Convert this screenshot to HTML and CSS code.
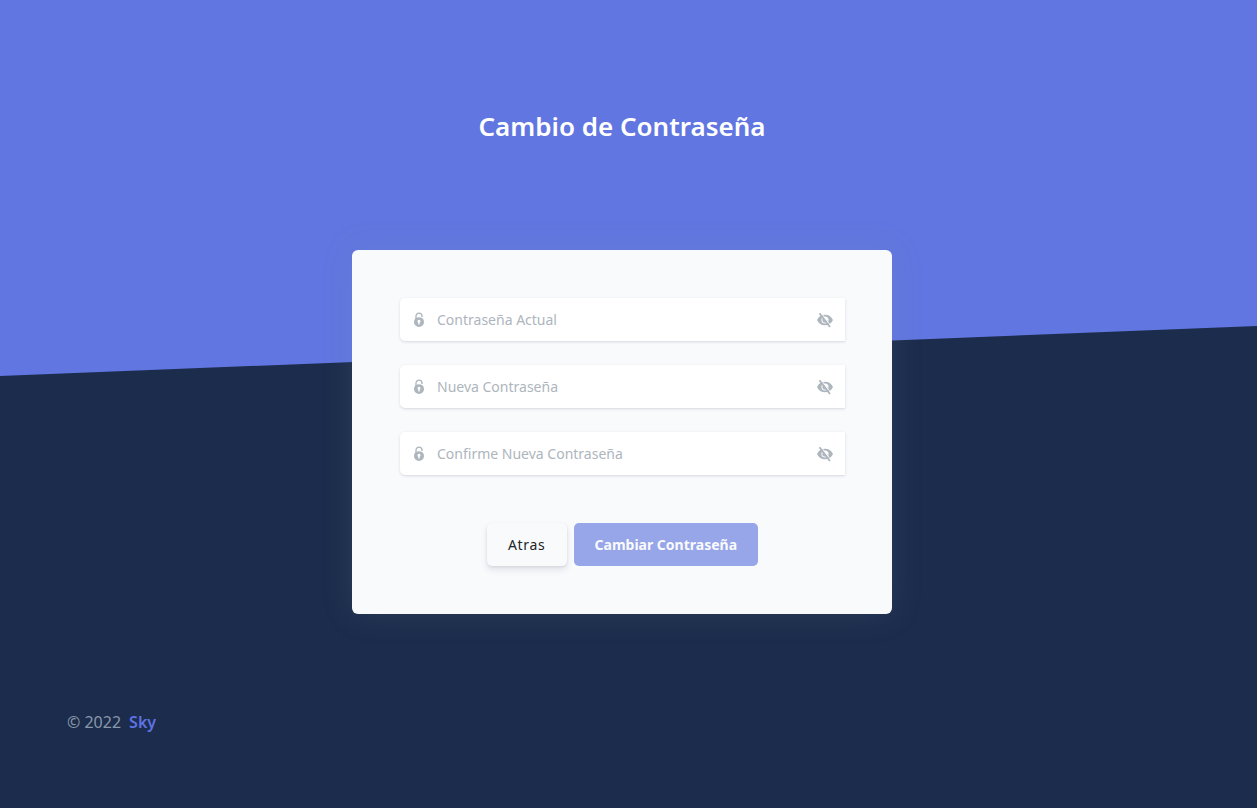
FILE: index.html
```
<!DOCTYPE html>
<html lang="es">
<head>
<meta charset="utf-8">
<meta name="viewport" content="width=device-width, initial-scale=1">
<title>Cambio de Contraseña</title>
<link rel="stylesheet" href="styles.css">
</head>
<body>
<svg class="defs" width="0" height="0" aria-hidden="true">
  <symbol id="lock" viewBox="0 0 12 16">
    <path d="M3 7V4.200a3 3 0 0 1 6 0v.8" fill="none" stroke="currentColor" stroke-width="1.300"/>
    <path fill="currentColor" fill-rule="evenodd" d="M2.900 5.900C4.800 5 7.200 5 9.100 5.900A5 5 0 0 1 11 10a5 5 0 0 1-10 0 5 5 0 0 1 1.900-4.100zM6 7.700a1.600 1.600 0 0 0-.7 3V12.500h1.400v-1.800a1.600 1.600 0 0 0-.7-3z"/>
  </symbol>
  <symbol id="eye-off" viewBox="0 0 18 16">
    <path fill="currentColor" fill-rule="evenodd" d="M1 8c1.600-3.400 4.500-5.300 8-5.300S15.400 4.600 17 8c-1.600 3.400-4.500 5.300-8 5.300S2.600 11.400 1 8zM9 4.400a3.600 3.600 0 1 0 0 7.200 3.600 3.600 0 0 0 0-7.200z"/>
    <path fill="currentColor" d="M9 5.400a2.600 2.600 0 1 0 2.600 2.600A1.500 1.500 0 0 1 9 5.400z"/>
    <path d="M4.800.6 15 14.200" stroke="#fff" stroke-width="1"/>
    <path d="M3.500 1.200 14 15" stroke="currentColor" stroke-width="1.800"/>
  </symbol>
</svg>
<main class="page">
  <h1 class="title">Cambio de Contraseña</h1>
  <form class="card">
    <div class="field">
      <svg class="lock"><use href="#lock"/></svg>
      <input class="input" type="password" placeholder="Contraseña Actual" aria-label="Contraseña Actual">
      <button class="toggle" type="button" aria-label="Mostrar contraseña"><svg class="eye"><use href="#eye-off"/></svg></button>
    </div>
    <div class="field">
      <svg class="lock"><use href="#lock"/></svg>
      <input class="input" type="password" placeholder="Nueva Contraseña" aria-label="Nueva Contraseña">
      <button class="toggle" type="button" aria-label="Mostrar contraseña"><svg class="eye"><use href="#eye-off"/></svg></button>
    </div>
    <div class="field">
      <svg class="lock"><use href="#lock"/></svg>
      <input class="input" type="password" placeholder="Confirme Nueva Contraseña" aria-label="Confirme Nueva Contraseña">
      <button class="toggle" type="button" aria-label="Mostrar contraseña"><svg class="eye"><use href="#eye-off"/></svg></button>
    </div>
    <div class="actions">
      <button class="btn btn-back" type="button">Atras</button>
      <button class="btn btn-primary" type="submit" disabled>Cambiar Contraseña</button>
    </div>
  </form>
  <footer class="footer">© 2022 <a class="brand" href="#">Sky</a></footer>
</main>
</body>
</html>
```
FILE: styles.css
```
* { box-sizing: border-box; }
body {
  margin: 0;
  min-height: 100vh;
  font-family: "Noto Sans", "Open Sans", sans-serif;
  font-size: 16px;
  line-height: 24px;
  color: #525f7f;
  background: #1c2c4c;
}
.defs { position: absolute; }
.page {
  position: relative;
  min-height: 100vh;
  padding: 108px 13px 0 0;
  display: flex;
  flex-direction: column;
  align-items: center;
}
/* slanted header backdrop */
.page::before {
  content: "";
  position: absolute;
  z-index: -1;
  inset: 0 0 auto;
  height: 376px;
  background: #6176e0;
  clip-path: polygon(0 0, 100% 0, 100% 326px, 0 100%);
}
.title {
  margin: 0 0 106px;
  font-size: 26px;
  line-height: 36px;
  font-weight: 600;
  color: #fff;
}
.card {
  width: calc(100% - 32px);
  max-width: 540px;
  padding: 48px 47px 48px 48px;
  border-radius: 6px;
  background: #f9fafc;
  box-shadow: 0 0 32px rgba(136, 152, 170, .15);
}
.field {
  display: flex;
  align-items: center;
  height: 43px;
  margin-bottom: 24px;
  padding: 0 11px 0 13px;
  border-radius: 5px 0 0 5px;
  background: #fff;
  color: #adb5bd;
  box-shadow: 0 1px 3px rgba(50, 50, 93, .15), 0 1px 0 rgba(0, 0, 0, .02);
}
.lock { width: 12px; height: 16px; flex: none; }
.input {
  flex: 1;
  min-width: 0;
  height: 100%;
  padding: 0 12px;
  border: 0;
  outline: 0;
  background: none;
  font: 14px/20px "Noto Sans", "Open Sans", sans-serif;
  color: #525f7f;
}
.input::placeholder { color: #adb5bd; opacity: 1; }
.toggle {
  display: flex;
  padding: 0;
  border: 0;
  background: none;
  color: inherit;
  cursor: pointer;
}
.eye { width: 18px; height: 16px; }
.actions {
  display: flex;
  justify-content: center;
  gap: 7px;
  padding-top: 24px;
}
.btn {
  height: 43px;
  padding: 0 21px;
  border: 0;
  border-radius: 5px;
  font: 700 14px/20px "Noto Sans", "Open Sans", sans-serif;
}
.btn-back {
  font-weight: 400;
  letter-spacing: .05em;
  color: #212529;
  background: #f9fafc;
  box-shadow: 0 4px 6px rgba(50, 50, 93, .11), 0 1px 3px rgba(0, 0, 0, .08);
}
.btn-primary { color: #f9fafc; background: #97a5e9; }
.footer {
  align-self: flex-start;
  display: flex;
  gap: 8px;
  padding: 96px 67px 74px;
  color: #8898aa;
}
.brand { color: #5e72e4; font-weight: 600; text-decoration: none; }
```
